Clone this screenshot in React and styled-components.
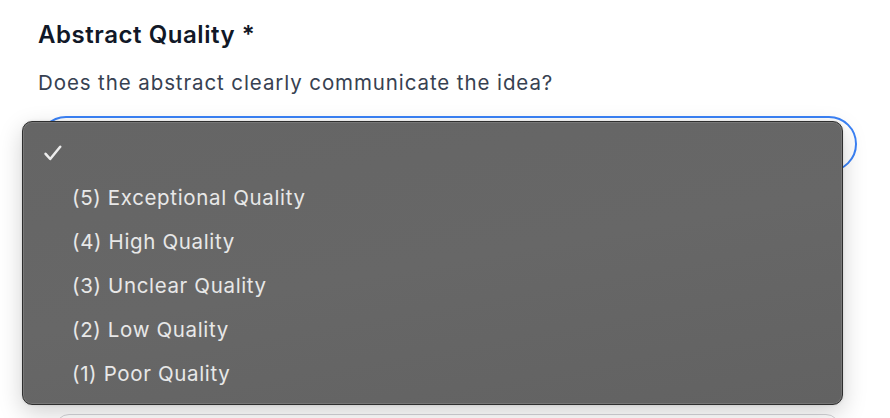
import React from 'react';
import styled, { createGlobalStyle } from 'styled-components';

const GlobalStyle = createGlobalStyle`
  html, body {
    margin: 0;
    padding: 0;
    background: #ffffff;
  }
  body {
    font-family: Inter, "Noto Sans", "Liberation Sans", sans-serif;
    -webkit-font-smoothing: antialiased;
  }
`;

const Page = styled.div`
  width: 890px;
  height: 418px;
  overflow: hidden;
  padding: 19px 33px 0 38px;
  box-sizing: border-box;
`;

const Title = styled.h2`
  margin: 0;
  font-size: 24px;
  line-height: 32px;
  font-weight: 600;
  color: #111827;
  letter-spacing: 0.55px;
`;

const Hint = styled.p`
  margin: 18px 0 0;
  font-size: 20.5px;
  line-height: 28px;
  color: #374151;
  letter-spacing: 0.9px;
`;

const Field = styled.div`
  position: relative;
  margin-top: 19px;
`;

const SelectBox = styled.div`
  height: 56px;
  width: 819px;
  box-sizing: border-box;
  border: 2px solid #3b82f6;
  border-radius: 28px;
  background: #ffffff;
`;

const NextBox = styled.div`
  margin: 242px 0 0 17px;
  width: 783px;
  height: 40px;
  border: 1px solid #d4d4d8;
  border-radius: 14px;
  background: #ffffff;
`;

const Menu = styled.ul`
  position: absolute;
  top: 5px;
  left: -16px;
  width: 821px;
  height: 284px;
  margin: 0;
  padding: 9px 0 0;
  box-sizing: border-box;
  list-style: none;
  border-radius: 10px;
  border: 1px solid #2e2e2e;
  background: linear-gradient(170deg, #656565 0%, #676767 50%, #626262 100%);
  box-shadow:
    inset 0 0 0 1px rgba(255, 255, 255, 0.12),
    0 8px 24px rgba(0, 0, 0, 0.18),
    0 0 3px rgba(0, 0, 0, 0.12);
`;

const Option = styled.li`
  height: 44px;
  display: flex;
  align-items: center;
  padding-left: ${p => (p.$check ? '21px' : '49px')};
  font-size: 20.5px;
  color: #e8e8e8;
  letter-spacing: 0.65px;
`;

const Check = () => (
  <svg width="18" height="16" viewBox="0 0 18 16" fill="none">
    <path
      d="M1.6 8.8 L6.2 14 L16.2 1.8"
      stroke="#ededed"
      strokeWidth="2.5"
      strokeLinecap="round"
      strokeLinejoin="round"
    />
  </svg>
);

const options = [
  '(5) Exceptional Quality',
  '(4) High Quality',
  '(3) Unclear Quality',
  '(2) Low Quality',
  '(1) Poor Quality',
];

export default function App() {
  return (
    <>
      <GlobalStyle />
      <Page>
        <Title>Abstract Quality *</Title>
        <Hint>Does the abstract clearly communicate the idea?</Hint>
        <Field>
          <SelectBox />
          <Menu>
            <Option $check>
              <Check />
            </Option>
            {options.map(o => (
              <Option key={o}>{o}</Option>
            ))}
          </Menu>
          <NextBox />
        </Field>
      </Page>
    </>
  );
}
